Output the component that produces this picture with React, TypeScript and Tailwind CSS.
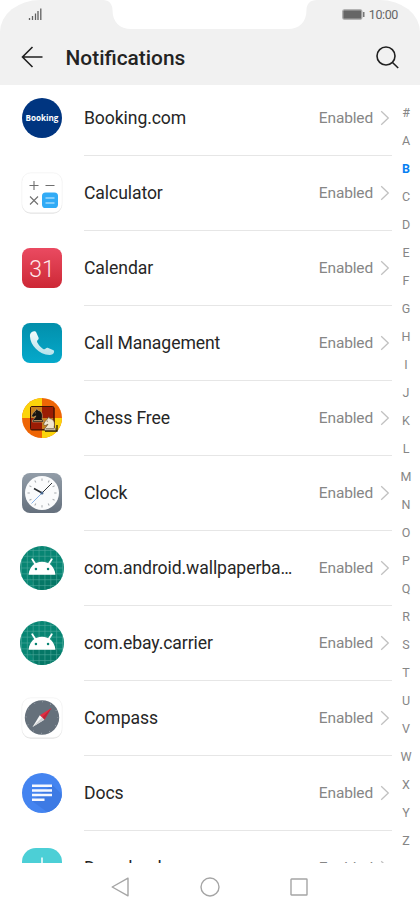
import type { ReactNode } from 'react';

const letters = '#ABCDEFGHIJKLMNOPQRSTUVWXYZ'.split('');

function BookingIcon() {
  return (
    <div className="size-10 rounded-full bg-[#003580] flex items-center justify-center text-white text-[8.1px] font-bold font-['Open_Sans',sans-serif]">
      Booking
    </div>
  );
}

function CalculatorIcon() {
  return (
    <svg className="size-11" viewBox="0 0 44 44" fill="none">
      <rect x="2" y="2.6" width="40" height="40" rx="9" fill="#d4d4d4" />
      <rect x="1.8" y="1.8" width="40.4" height="40" rx="9" fill="#fff" stroke="#eeeeee" strokeWidth=".6" />
      <path d="M9.5 14.5h9M14 10v9M25.5 14.5h9M10 25.5l8 8M18 25.5l-8 8" stroke="#6f6f6f" strokeWidth="1.1" />
      <rect x="22" y="21.5" width="16" height="15.5" rx="3.6" fill="#31abf6" />
      <path d="M25.5 27h9M25.5 32h9" stroke="#d9f1ff" strokeWidth="1.1" />
    </svg>
  );
}

function CalendarIcon() {
  return (
    <div className="size-10 rounded-[8px] bg-linear-to-b from-[#ea4a61] to-[#cd2735] flex items-center justify-center text-[#ffe9ec] text-[23px] leading-none font-light pt-0.5">
      31
    </div>
  );
}

function CallIcon() {
  return (
    <svg className="size-10" viewBox="0 0 40 40">
      <defs>
        <linearGradient id="call-bg" x1="0" y1="0" x2="0" y2="1">
          <stop offset="0" stopColor="#028fab" />
          <stop offset="1" stopColor="#05a9cb" />
        </linearGradient>
        <linearGradient id="call-fg" x1="0" y1="0" x2="0" y2="1">
          <stop offset="0" stopColor="#f2fafb" />
          <stop offset="1" stopColor="#b5e3ec" />
        </linearGradient>
      </defs>
      <rect width="40" height="40" rx="8" fill="url(#call-bg)" />
      <path
        d="M12 8.300c-2.500.3-4.200 2.200-4.100 4.600C8.300 22.500 17 31.200 27.500 32c2.300.1 4-1 4.500-2.800.3-1.100 0-1.900-1-2.300l-4.800-2c-1-.4-1.800-.1-2.500.7-.7.9-1.600 1-2.600.3-2.600-1.700-4.500-4-5.800-6.500-.5-1-.3-1.700.5-2.300.8-.7 1-1.400.8-2.300L14.500 9.900c-.4-1.200-1.200-1.800-2.500-1.600z"
        fill="url(#call-fg)"
      />
    </svg>
  );
}

function Knight({ fill, stroke, x, y }: { fill: string; stroke: string; x: number; y: number }) {
  return (
    <g transform={`translate(${x} ${y})`}>
      <path
        d="M1 13.500h11v-2l-1.500-.8C11.800 6 10.200 2.200 6.300 1.800L5.200 0l-1 2L1.600 4.500 0 7.500l1.500 1.300 3-1.400c-.3 1.200-1.800 2-2.200 3.200L1 11.500z"
        fill={fill}
        stroke={stroke}
        strokeWidth=".6"
      />
      <path d="M3.300 4.400h.9M2 12h9" stroke={stroke} strokeWidth=".8" />
    </g>
  );
}

function ChessIcon() {
  return (
    <svg className="size-10" viewBox="0 0 40 40">
      <defs>
        <clipPath id="chess-clip">
          <circle cx="20" cy="20" r="20" />
        </clipPath>
      </defs>
      <g clipPath="url(#chess-clip)">
        <rect width="40" height="40" fill="#ee6505" />
        <path d="M0 0h20v20H0zM20 20h20v20H20z" fill="#fbd40b" />
        <rect x="8.500" y="8.500" width="23.500" height="23.500" rx="1.500" fill="#9b1c04" stroke="#3b1205" />
        <path d="M9 9h11v11H9zM20 20h11.500v11.500H20z" fill="#c9811d" />
        <path d="M9 31.500h23V10" stroke="#511304" strokeWidth="1.200" fill="none" />
      </g>
      <Knight x={9.5} y={10.5} fill="#171411" stroke="#cfa873" />
      <path d="M23 33h12v-6" stroke="#1d1409" strokeWidth="1.300" fill="none" />
      <Knight x={21.500} y={18.800} fill="#f0e5ce" stroke="#554330" />
    </svg>
  );
}

function ClockIcon() {
  const ticks = Array.from({ length: 12 }, (_, i) => i * 30);

  return (
    <svg className="size-10" viewBox="0 0 40 40">
      <defs>
        <linearGradient id="clock-bg" x1="0" y1="0" x2="0" y2="1">
          <stop offset="0" stopColor="#929da8" />
          <stop offset="1" stopColor="#65707d" />
        </linearGradient>
      </defs>
      <rect width="40" height="40" rx="8" fill="url(#clock-bg)" />
      <circle cx="20" cy="20" r="17" fill="#fafbfc" />
      {ticks.map((deg) => (
        <path key={deg} d="M20 5.500v2.300" stroke="#a5a9ad" strokeWidth="1" transform={`rotate(${deg} 20 20)`} />
      ))}
      <path d="M20 20L9.500 30.500" stroke="#6ba0e0" strokeWidth=".8" />
      <path d="M20 20L30 10" stroke="#33373b" strokeWidth="1" />
      <path d="M20 20l-8-4.500" stroke="#292d31" strokeWidth="1.500" />
      <circle cx="20" cy="20" r="1.500" fill="#47658b" />
    </svg>
  );
}

function AndroidIcon() {
  return (
    <svg className="size-11" viewBox="0 0 45 45">
      <defs>
        <clipPath id="android-clip">
          <circle cx="22.500" cy="22.500" r="22.500" />
        </clipPath>
      </defs>
      <g clipPath="url(#android-clip)">
        <rect width="45" height="45" fill="#078573" />
        <path d="M9 29l8 16h19l8-10-8-9z" fill="#057766" />
        <path
          d="M1.500 0v45M7.500 0v45M13.500 0v45M19.500 0v45M25.500 0v45M31.500 0v45M37.500 0v45M43.500 0v45M0 4.500h45M0 10.500h45M0 16.500h45M0 22.500h45M0 28.500h45M0 34.500h45M0 40.500h45"
          stroke="#51aa9e"
          strokeWidth=".6"
        />
      </g>
      <path d="M12.500 13.500l3.500 5.500M32.500 13.500L29 19" stroke="#fff" strokeWidth="1.800" strokeLinecap="round" />
      <path d="M8.800 29.300c.6-7.600 6.300-13.100 13.700-13.100s13.100 5.500 13.700 13.100z" fill="#fff" />
      <circle cx="16.300" cy="23.500" r="1.300" fill="#078573" />
      <circle cx="28.700" cy="23.500" r="1.300" fill="#078573" />
    </svg>
  );
}

function CompassIcon() {
  return (
    <svg className="size-11" viewBox="0 0 44 44">
      <rect x="2" y="2.600" width="40" height="40" rx="9" fill="#d4d4d4" />
      <rect x="1.800" y="1.800" width="40.400" height="40" rx="9" fill="#fff" stroke="#eeeeee" strokeWidth=".6" />
      <circle cx="22" cy="21.500" r="17.200" fill="#65707b" />
      <circle cx="22" cy="21.500" r="15.800" fill="none" stroke="#a8b0b7" strokeWidth="1.200" strokeDasharray=".6 7.673" />
      <path d="M31.500 12l-7.200 11.700-4.500-4.500z" fill="#e42d42" />
      <path d="M31.500 12l-7.200 11.700-2.300-2.200z" fill="#bd2638" />
      <path d="M12.500 31l7.300-11.800 4.500 4.500z" fill="#f6f6f6" />
      <path d="M12.500 31L22 21.500l2.300 2.200z" fill="#cfd1d3" />
    </svg>
  );
}

function DocsIcon() {
  return (
    <svg className="size-10" viewBox="0 0 40 40">
      <defs>
        <clipPath id="docs-clip">
          <circle cx="20" cy="20" r="20" />
        </clipPath>
      </defs>
      <circle cx="20" cy="20" r="20" fill="#4484f0" />
      <path d="M30 11.500l14 14L32 44 10 28z" fill="#3d7ae4" clipPath="url(#docs-clip)" />
      <path d="M10 12.700h20M10 17.400h20M10 22.100h20M10 26.800h12.500" stroke="#f5f8fe" strokeWidth="2.500" />
    </svg>
  );
}

function DownloadsIcon() {
  return (
    <svg className="size-10" viewBox="0 0 40 40">
      <rect width="40" height="40" rx="14" fill="#4ccfd6" />
      <path d="M20 9.500v18M13 21l7 7 7-7" stroke="#fff" strokeWidth="1.500" fill="none" />
    </svg>
  );
}

const apps: { name: string; icon: ReactNode }[] = [
  { name: 'Booking.com', icon: <BookingIcon /> },
  { name: 'Calculator', icon: <CalculatorIcon /> },
  { name: 'Calendar', icon: <CalendarIcon /> },
  { name: 'Call Management', icon: <CallIcon /> },
  { name: 'Chess Free', icon: <ChessIcon /> },
  { name: 'Clock', icon: <ClockIcon /> },
  { name: 'com.android.wallpaperbackup', icon: <AndroidIcon /> },
  { name: 'com.ebay.carrier', icon: <AndroidIcon /> },
  { name: 'Compass', icon: <CompassIcon /> },
  { name: 'Docs', icon: <DocsIcon /> },
  { name: 'Downloads', icon: <DownloadsIcon /> },
];

function Header() {
  return (
    <header className="relative h-[85px] shrink-0 bg-[#f1f1f1] rounded-t-[40px_32px]">
      <svg className="absolute top-0 left-[103px]" width="214" height="30" viewBox="0 0 214 30">
        <path d="M0 0c6 0 9.500 4 9.500 10 0 12 7 19 19 19h156c12 0 19-7 19-19 0-6 3.500-10 10.500-10z" fill="#fff" />
      </svg>
      <div className="flex h-[30px] items-center justify-between pl-7 pr-[22px]">
        <svg width="14" height="14" viewBox="0 0 14 14" className="-mt-0.5">
          <path d="M1.500 11v2M4.500 9v4M7.500 6.500V13M10 4v9M12.800 1.500V13" stroke="#606060" strokeWidth="1.300" />
        </svg>
        <div className="flex items-center gap-1">
          <svg width="23" height="11" viewBox="0 0 23 11" className="-mt-px">
            <rect x=".8" y=".8" width="19" height="9.400" rx="1.500" fill="#666" stroke="#aaa" strokeWidth="1.300" />
            <path d="M21.700 3v5" stroke="#777" strokeWidth="1.600" />
          </svg>
          <span className="text-[12.500px] leading-none tracking-[-0.400px] text-[#666]">10:00</span>
        </div>
      </div>
      <div className="flex h-[55px] items-center pl-[21px] pr-[21px]">
        <svg width="22" height="22" viewBox="0 0 22 22" fill="none" stroke="#202020" strokeWidth="1.600" className="-mt-0.5">
          <path d="M21.500 11H1.500M11.500 1L1.500 11l10 10" />
        </svg>
        <h1 className="ml-[22.500px] flex-1 pt-0.5 text-[20.900px] font-medium text-[#232323]">Notifications</h1>
        <svg width="23" height="23" viewBox="0 0 23 23" fill="none" stroke="#202020" strokeWidth="1.600" className="-mt-px">
          <circle cx="10" cy="10" r="9" />
          <path d="M16.500 16.500l5.700 5.500" />
        </svg>
      </div>
    </header>
  );
}

function NavBar() {
  return (
    <nav className="flex h-[47px] shrink-0 items-center justify-between pl-[111px] pr-[112px]">
      <svg width="19" height="20" viewBox="0 0 19 20" fill="none" stroke="#a5a5a5" strokeWidth="1.400" strokeLinejoin="round">
        <path d="M17 1.200v17.600L1.200 10z" />
      </svg>
      <svg width="20" height="20" viewBox="0 0 20 20" fill="none" stroke="#a5a5a5" strokeWidth="1.400">
        <circle cx="10" cy="10" r="9" />
      </svg>
      <svg width="18" height="18" viewBox="0 0 18 18" fill="none" stroke="#a5a5a5" strokeWidth="1.400">
        <rect x="1" y="1" width="16" height="16" rx=".5" />
      </svg>
    </nav>
  );
}

export default function App() {
  return (
    <div className="flex h-[910px] w-[420px] flex-col overflow-hidden bg-white font-[Roboto,sans-serif]">
      <Header />
      <main className="flex h-[778px] shrink-0 overflow-hidden">
        <ul className="-mt-1 w-[392px]">
          {apps.map((app) => (
            <li key={app.name} className="flex h-[75px] items-center">
              <div className="flex w-[84px] shrink-0 justify-center pb-px">{app.icon}</div>
              <div className="flex h-full min-w-0 flex-1 items-center border-b border-[#e6e6e6]">
                <span className="w-[212px] truncate pt-px text-[17.600px] tracking-[-0.090px] text-[#262626]">{app.name}</span>
                <span className="ml-auto pt-0.5 text-[15.500px] tracking-[-0.150px] text-[#868686]">Enabled</span>
                <svg className="ml-[7px] mr-0.5" width="10" height="16" viewBox="0 0 10 16" fill="none">
                  <path d="M1.200 1.200L8.300 8l-7.100 6.800" stroke="#c1c1c1" strokeWidth="1.300" />
                </svg>
              </div>
            </li>
          ))}
        </ul>
        <div className="flex w-7 flex-col pt-[14px] text-center text-[12.500px] leading-7 text-[#868686]">
          {letters.map((letter) => (
            <span key={letter} className={letter === 'B' ? 'h-7 font-bold text-[#087ff2]' : 'h-7'}>
              {letter}
            </span>
          ))}
        </div>
      </main>
      <NavBar />
    </div>
  );
}
